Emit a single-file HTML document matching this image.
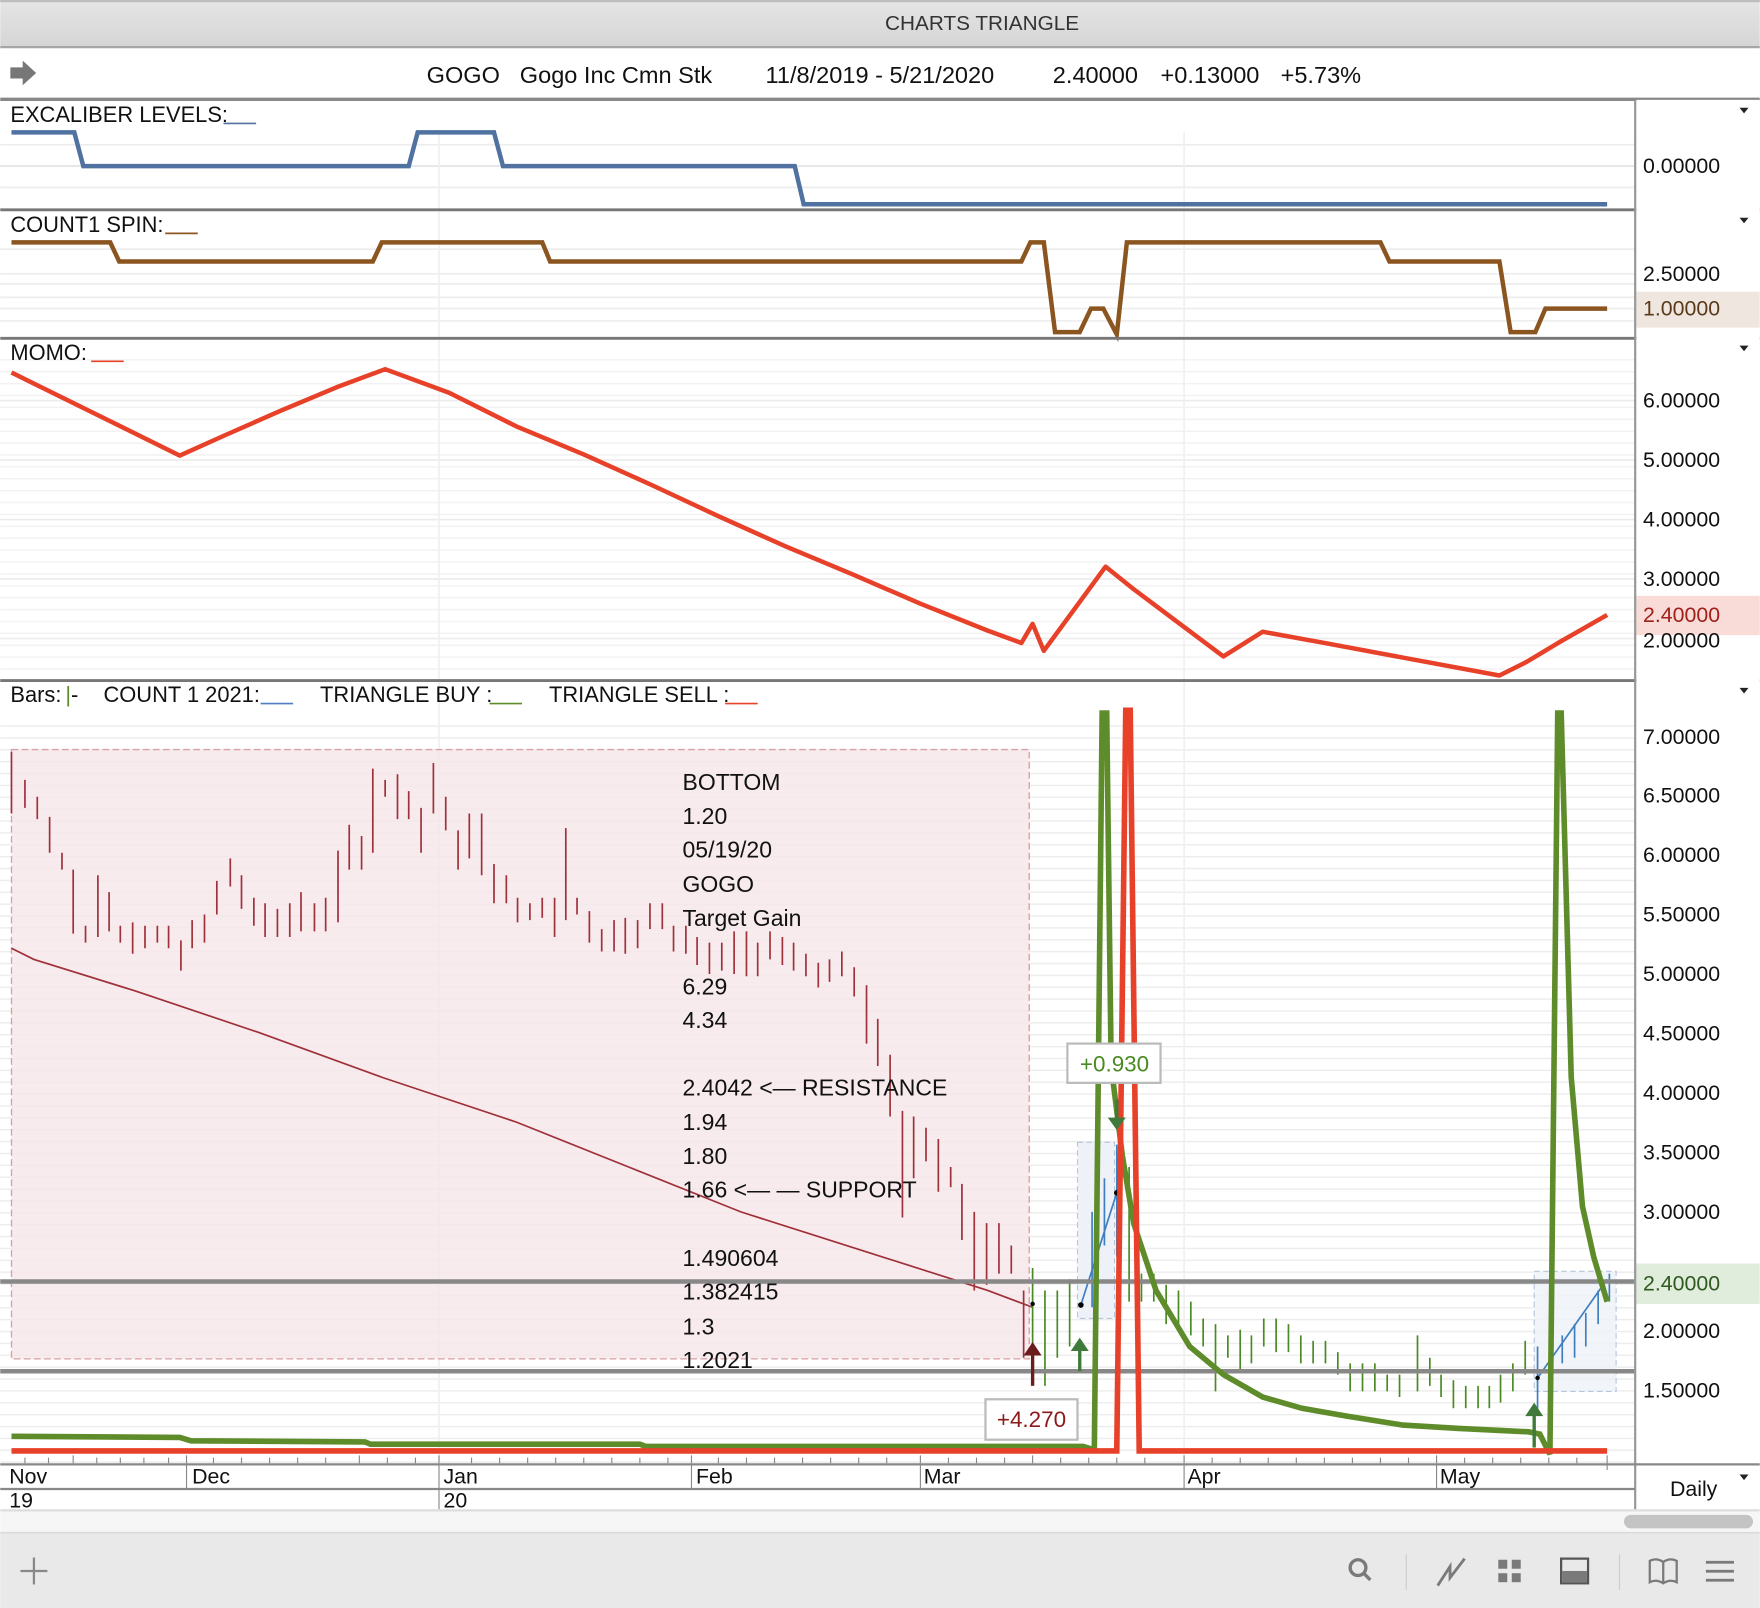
<!DOCTYPE html>
<html><head><meta charset="utf-8"><style>
html,body{margin:0;padding:0;background:#fff}
svg{display:block}
text{font-family:"Liberation Sans",Arial,sans-serif;dominant-baseline:central}
</style></head><body>
<svg width="1760" height="1608" viewBox="0 0 1568 1433" xmlns="http://www.w3.org/2000/svg">
<defs>
<linearGradient id="tb" x1="0" y1="0" x2="0" y2="1"><stop offset="0" stop-color="#e6e5e6"/><stop offset="1" stop-color="#d6d5d6"/></linearGradient>
<pattern id="g4" width="10" height="10.58" patternUnits="userSpaceOnUse" y="657"><line x1="0" y1="0.5" x2="10" y2="0.5" stroke="#ececec" stroke-width="1.5"/></pattern>
<pattern id="g3" width="10" height="10.6" patternUnits="userSpaceOnUse" y="320"><line x1="0" y1="0.5" x2="10" y2="0.5" stroke="#f1f1f1" stroke-width="1.5"/></pattern>
</defs>
<rect width="1568" height="1433" fill="#fff"/>
<rect x="0" y="0" width="1568" height="42" fill="url(#tb)"/>
<line x1="0" y1="1" x2="1568" y2="1" stroke="#bdbdbd" stroke-width="2"/>
<line x1="0" y1="42" x2="1568" y2="42" stroke="#a6a6a6" stroke-width="2"/>
<text x="875" y="21" font-size="18.5" fill="#333" text-anchor="middle">CHARTS TRIANGLE</text>
<path d="M9 60 H20 V54 L32 65 L20 76 V70 H9 Z" fill="#777"/>
<g font-size="21" fill="#111">
<text x="380" y="67">GOGO</text>
<text x="463" y="67">Gogo Inc Cmn Stk</text>
<text x="682" y="67">11/8/2019 - 5/21/2020</text>
<text x="938" y="67">2.40000</text>
<text x="1034" y="67">+0.13000</text>
<text x="1141" y="67">+5.73%</text>
</g>
<line x1="0" y1="88.5" x2="1568" y2="88.5" stroke="#888" stroke-width="3"/>

<g stroke="#ededed" stroke-width="1.5">
<line x1="0" y1="129" x2="1457" y2="129"/><line x1="0" y1="148" x2="1457" y2="148" stroke="#e2e2e2"/><line x1="0" y1="167" x2="1457" y2="167"/>
<line x1="0" y1="244" x2="1457" y2="244"/><line x1="0" y1="253" x2="1457" y2="253"/><line x1="0" y1="222" x2="1457" y2="222"/><line x1="0" y1="275" x2="1457" y2="275"/><line x1="0" y1="265" x2="1457" y2="265"/><line x1="0" y1="286" x2="1457" y2="286"/>
</g>
<rect x="0" y="320" width="1457" height="285" fill="url(#g3)"/>
<g stroke="#ececec" stroke-width="1.5"><line x1="0" y1="357" x2="1457" y2="357"/><line x1="0" y1="410" x2="1457" y2="410"/><line x1="0" y1="463" x2="1457" y2="463"/><line x1="0" y1="516" x2="1457" y2="516"/><line x1="0" y1="569" x2="1457" y2="569"/></g>
<rect x="0" y="640" width="1457" height="664" fill="url(#g4)"/>
<g stroke="#f0f0f0" stroke-width="1.5"><line x1="391" y1="118" x2="391" y2="1305"/><line x1="1055" y1="118" x2="1055" y2="1305"/></g>

<text x="9" y="102" font-size="19.5" fill="#111">EXCALIBER LEVELS:</text><line x1="199" y1="110" x2="228" y2="110" stroke="#4f72a0" stroke-width="1.5"/>
<polyline points="10,118 66,118 74,148 364,148 372,118 440,118 448,148 708,148 716,182 1432,182" fill="none" stroke="#4f72a0" stroke-width="4"/>
<line x1="0" y1="187" x2="1568" y2="187" stroke="#777" stroke-width="2.5"/>

<text x="9" y="200" font-size="19.5" fill="#111">COUNT1 SPIN:</text><line x1="147" y1="208" x2="176" y2="208" stroke="#8b5520" stroke-width="1.5"/>
<polyline points="10,216 98,216 106,233 332,233 340,216 483,216 490,233 910,233 918,216 930,216 940,296 962,296 972,275 983,275 995,298 1004,216 1230,216 1238,233 1336,233 1346,296 1368,296 1377,275 1432,275" fill="none" stroke="#8b5520" stroke-width="4"/>
<line x1="0" y1="301.5" x2="1568" y2="301.5" stroke="#777" stroke-width="2.5"/>

<text x="9" y="314" font-size="19.5" fill="#111">MOMO:</text><line x1="81" y1="322" x2="110" y2="322" stroke="#e8412a" stroke-width="1.5"/>
<polyline points="10,332 160,406 200,388 250,366 300,345 343,329 400,350 460,380 520,405 580,432 640,460 700,487 760,512 820,538 880,562 910,573 920,556 930,580 985,505 1010,525 1050,555 1090,585 1125,563 1180,573 1336,602 1360,590 1390,572 1432,548" fill="none" stroke="#e8412a" stroke-width="4" stroke-linejoin="round"/>
<line x1="0" y1="606.5" x2="1568" y2="606.5" stroke="#777" stroke-width="2.5"/>

<g font-size="19.5" fill="#111">
<text x="9" y="619">Bars:</text><text x="58" y="619" fill="#5f8c2a">|</text><text x="63" y="619">-</text>
<text x="92" y="619">COUNT 1 2021:</text>
<text x="285" y="619">TRIANGLE BUY :</text>
<text x="489" y="619">TRIANGLE SELL :</text>
</g>
<line x1="232" y1="627" x2="261" y2="627" stroke="#4f7fc0" stroke-width="1.5"/>
<line x1="436" y1="627" x2="465" y2="627" stroke="#5f8c2a" stroke-width="1.5"/>
<line x1="646" y1="627" x2="675" y2="627" stroke="#e8412a" stroke-width="1.5"/>

<rect x="10" y="668" width="907" height="543" fill="#f5e6e8" fill-opacity="0.8" stroke="#d9a0a5" stroke-dasharray="6,3" stroke-width="1.2"/>
<rect x="960" y="1018" width="33" height="157" fill="#eef2f8" stroke="#b7c6dd" stroke-dasharray="5,3"/>
<rect x="1367" y="1133" width="73" height="107" fill="#eef2f8" fill-opacity="0.8" stroke="#b7c6dd" stroke-dasharray="5,3"/>

<polyline points="10,845 30,855 120,883 230,920 340,960 460,1000 560,1040 660,1080 770,1115 880,1150 920,1165" fill="none" stroke="#a0303a" stroke-width="1.5"/>

<path stroke="#a0303a" stroke-width="1.5" fill="none" d="M10 670V725M22 695V720M33 710V730M44 728V760M55 760V775M65 775V832M76 825V840M87 780V835M97 795V830M107 825V840M118 822V850M129 825V845M140 825V840M150 825V845M161 838V865M171 820V845M182 815V840M193 785V815M205 765V790M215 780V810M226 800V825M236 805V835M247 810V835M258 805V835M268 795V830M280 805V830M290 800V830M301 758V822M311 735V775M322 745V775M332 685V760M343 695V710M354 690V730M364 705V730M375 720V760M386 680V725M397 710V740M408 740V775M418 725V765M429 725V780M440 770V805M451 780V805M461 800V822M472 805V820M483 800V818M494 800V835M504 738V820M514 800V815M525 812V840M536 828V848M547 820V848M557 818V850M568 820V845M579 805V828M590 805V828M600 825V848M611 825V850M621 835V860M632 840V868M643 840V865M654 830V868M665 830V870M675 840V870M686 830V855M697 835V860M707 840V865M718 850V870M729 858V880M739 855V875M750 848V870M761 862V888M772 878V930M782 908V950M793 940V995M804 990V1085M814 995V1050M825 1005V1035M836 1015V1062M847 1040V1058M857 1055V1105M868 1080V1150M879 1090V1145M890 1090V1135M901 1110V1135M912 1150V1210"/>
<path stroke="#4a8a22" stroke-width="1.5" fill="none" d="M920 1130V1200M931 1150V1235M942 1150V1210M953 1140V1200M1006 1040V1160M1017 1135V1160M1028 1135V1160M1039 1145V1180M1050 1150V1180M1061 1160V1190M1072 1175V1200M1083 1180V1240M1094 1190V1210M1105 1185V1220M1115 1190V1215M1126 1175V1200M1137 1175V1205M1148 1180V1205M1159 1190V1215M1170 1195V1215M1181 1195V1215M1192 1205V1225M1203 1215V1240M1214 1215V1240M1225 1215V1240M1236 1225V1240M1247 1225V1245M1263 1190V1240M1274 1210V1235M1284 1225V1245M1295 1230V1255M1306 1235V1255M1317 1235V1255M1327 1235V1255M1337 1225V1250M1348 1215V1240M1359 1195V1225"/>
<path stroke="#3f7fc0" stroke-width="1.5" fill="none" d="M973 1080V1165M984 1050V1110M995 1020V1120M1370 1200V1260M1381 1200V1220M1392 1190V1215M1403 1180V1210M1413 1170V1200M1424 1150V1180M1434 1135V1160"/>
<line x1="963" y1="1163" x2="995" y2="1063" stroke="#3f7fc0" stroke-width="1.5"/>
<line x1="1370" y1="1228" x2="1432" y2="1140" stroke="#3f7fc0" stroke-width="1.5"/>
<g fill="#000"><circle cx="920" cy="1162" r="2"/><circle cx="963" cy="1163" r="2.5"/><circle cx="995" cy="1063" r="2.5"/><circle cx="1370" cy="1228" r="2"/></g>

<line x1="0" y1="1142" x2="1457" y2="1142" stroke="#888" stroke-width="4"/>
<line x1="0" y1="1222" x2="1457" y2="1222" stroke="#888" stroke-width="4"/>

<polyline points="10,1280 160,1281 170,1284 325,1285 330,1287 570,1287 575,1289 965,1289 975,1292 982,633" fill="none" stroke="#5f8c2a" stroke-width="5"/>
<polyline points="986,633 990,950 1000,1030 1010,1090 1030,1150 1060,1200 1090,1225 1125,1245 1160,1255 1200,1262 1250,1270 1300,1273 1362,1276 1372,1278 1381,1296 1388,633" fill="none" stroke="#5f8c2a" stroke-width="5"/>
<polyline points="1391,633 1400,960 1410,1075 1420,1120 1432,1160" fill="none" stroke="#5f8c2a" stroke-width="5"/>
<path d="M10 1293H995L1003 633H1007L1015 1293H1432" fill="none" stroke="#e8412a" stroke-width="5"/>

<g stroke-width="3"><line x1="920" y1="1200" x2="920" y2="1235" stroke="#6b1d1d"/><path d="M912 1208 L920 1196 L928 1208Z" fill="#6b1d1d"/>
<line x1="962" y1="1196" x2="962" y2="1222" stroke="#3f7a3a"/><path d="M954 1204 L962 1192 L970 1204Z" fill="#3f7a3a"/>
<line x1="995" y1="980" x2="995" y2="1000" stroke="#3f7a3a"/><path d="M987 996 L995 1007 L1003 996Z" fill="#3f7a3a"/>
<line x1="1367" y1="1254" x2="1367" y2="1290" stroke="#3f7a3a"/><path d="M1359 1262 L1367 1250 L1375 1262Z" fill="#3f7a3a"/></g>

<rect x="951" y="930" width="83" height="35" fill="#fff" stroke="#bbb" stroke-width="2"/>
<text x="993" y="948" font-size="20" fill="#4a8a22" text-anchor="middle">+0.930</text>
<rect x="878" y="1247" width="82" height="36" fill="#fff" stroke="#bbb" stroke-width="2"/>
<text x="919" y="1265" font-size="20" fill="#8b1a1a" text-anchor="middle">+4.270</text>

<g font-size="20.5" fill="#111">
<text x="608" y="697">BOTTOM</text><text x="608" y="727">1.20</text><text x="608" y="757">05/19/20</text><text x="608" y="788">GOGO</text><text x="608" y="818">Target Gain</text><text x="608" y="879">6.29</text><text x="608" y="909">4.34</text><text x="608" y="969">2.4042 &lt;— RESISTANCE</text><text x="608" y="1000">1.94</text><text x="608" y="1030">1.80</text><text x="608" y="1060">1.66 &lt;— — SUPPORT</text><text x="608" y="1121">1.490604</text><text x="608" y="1151">1.382415</text><text x="608" y="1182">1.3</text><text x="608" y="1212">1.2021</text>
</g>

<rect x="1458" y="89" width="110" height="1256" fill="#fff"/>
<rect x="1458" y="260" width="110" height="32" fill="#efe7df"/>
<rect x="1458" y="531" width="110" height="35" fill="#f9dcd8"/>
<rect x="1458" y="1126" width="110" height="36" fill="#e0ecdc"/>
<line x1="1457" y1="89" x2="1457" y2="1345" stroke="#999" stroke-width="2"/>
<g font-size="19" fill="#111">
<text x="1464" y="148">0.00000</text><text x="1464" y="244">2.50000</text><text x="1464" y="275" fill="#5a3a1a">1.00000</text>
<text x="1464" y="357">6.00000</text><text x="1464" y="410">5.00000</text><text x="1464" y="463">4.00000</text><text x="1464" y="516">3.00000</text><text x="1464" y="571">2.00000</text><text x="1464" y="548" fill="#a0201a">2.40000</text>
<text x="1464" y="657">7.00000</text><text x="1464" y="709">6.50000</text><text x="1464" y="762">6.00000</text><text x="1464" y="815">5.50000</text><text x="1464" y="868">5.00000</text><text x="1464" y="921">4.50000</text><text x="1464" y="974">4.00000</text><text x="1464" y="1027">3.50000</text><text x="1464" y="1080">3.00000</text><text x="1464" y="1144" fill="#2f5a1f">2.40000</text><text x="1464" y="1186">2.00000</text><text x="1464" y="1239">1.50000</text>
</g>
<g fill="#222"><path d="M1550 96h8l-4 5z"/><path d="M1550 194h8l-4 5z"/><path d="M1550 308h8l-4 5z"/><path d="M1550 613h8l-4 5z"/><path d="M1550 1314h8l-4 5z"/></g>

<line x1="0" y1="1305" x2="1568" y2="1305" stroke="#888" stroke-width="2"/>
<path stroke="#888" stroke-width="1" d="M22 1299V1304M43 1299V1304M65 1297V1304M86 1299V1304M107 1299V1304M128 1299V1304M150 1299V1304M166 1297V1304M190 1299V1304M215 1299V1304M240 1299V1304M265 1299V1304M290 1299V1304M320 1297V1304M345 1299V1304M370 1299V1304M391 1297V1304M420 1299V1304M445 1299V1304M470 1299V1304M495 1299V1304M520 1299V1304M545 1299V1304M570 1299V1304M595 1299V1304M616 1297V1304M640 1299V1304M665 1299V1304M690 1299V1304M715 1299V1304M740 1299V1304M765 1299V1304M790 1299V1304M820 1297V1304M845 1299V1304M870 1299V1304M895 1299V1304M920 1297V1304M945 1299V1304M970 1299V1304M995 1299V1304M1020 1299V1304M1055 1297V1304M1080 1299V1304M1105 1299V1304M1130 1299V1304M1155 1299V1304M1180 1299V1304M1205 1299V1304M1230 1299V1304M1255 1299V1304M1280 1297V1304M1305 1299V1304M1330 1299V1304M1355 1299V1304M1380 1299V1304M1405 1299V1304M1432 1297V1310"/>
<g stroke="#888" stroke-width="1"><line x1="166" y1="1306" x2="166" y2="1327"/><line x1="391" y1="1306" x2="391" y2="1345"/><line x1="616" y1="1306" x2="616" y2="1327"/><line x1="820" y1="1306" x2="820" y2="1327"/><line x1="1055" y1="1306" x2="1055" y2="1327"/><line x1="1280" y1="1306" x2="1280" y2="1327"/></g>
<line x1="0" y1="1327" x2="1457" y2="1327" stroke="#888" stroke-width="2"/>
<g font-size="19" fill="#111"><text x="8" y="1316">Nov</text><text x="171" y="1316">Dec</text><text x="395" y="1316">Jan</text><text x="620" y="1316">Feb</text><text x="823" y="1316">Mar</text><text x="1058" y="1316">Apr</text><text x="1283" y="1316">May</text><text x="8" y="1337">19</text><text x="395" y="1337">20</text><text x="1488" y="1327">Daily</text></g>
<line x1="0" y1="1346" x2="1568" y2="1346" stroke="#ddd" stroke-width="2"/>
<rect x="0" y="1347" width="1568" height="18" fill="#f6f6f6"/>
<rect x="1447" y="1350" width="115" height="12" rx="6" fill="#c4c4c4"/>
<rect x="0" y="1365" width="1568" height="68" fill="#e9e9e9"/>
<line x1="0" y1="1366" x2="1568" y2="1366" stroke="#d6d6d6"/>
<g stroke="#888" stroke-width="2" fill="none"><line x1="30" y1="1388" x2="30" y2="1412"/><line x1="18" y1="1400" x2="42" y2="1400"/></g>
<g stroke="#7a7a7a" fill="none" stroke-width="3"><circle cx="1210" cy="1397" r="7"/><line x1="1215" y1="1402" x2="1221" y2="1408"/>
<path d="M1281 1413 L1292 1396 L1292 1406 L1305 1389" stroke-width="2.5"/></g>
<line x1="1253" y1="1385" x2="1253" y2="1417" stroke="#ccc"/><line x1="1443" y1="1385" x2="1443" y2="1417" stroke="#ccc"/>
<g fill="#7a7a7a"><rect x="1335" y="1390" width="8" height="8"/><rect x="1347" y="1390" width="8" height="8"/><rect x="1335" y="1402" width="8" height="8"/><rect x="1347" y="1402" width="8" height="8"/>
<rect x="1391" y="1389" width="24" height="22" fill="none" stroke="#555" stroke-width="2"/><rect x="1392" y="1400" width="22" height="10"/>
<rect x="1520" y="1391" width="25" height="2.5"/><rect x="1520" y="1399" width="25" height="2.5"/><rect x="1520" y="1407" width="25" height="2.5"/></g>
<path d="M1470 1391 Q1476 1388 1482 1392 Q1488 1388 1494 1391 V1410 Q1488 1407 1482 1411 Q1476 1407 1470 1410Z M1482 1392V1411" fill="none" stroke="#7a7a7a" stroke-width="2"/>
</svg>
</body></html>
